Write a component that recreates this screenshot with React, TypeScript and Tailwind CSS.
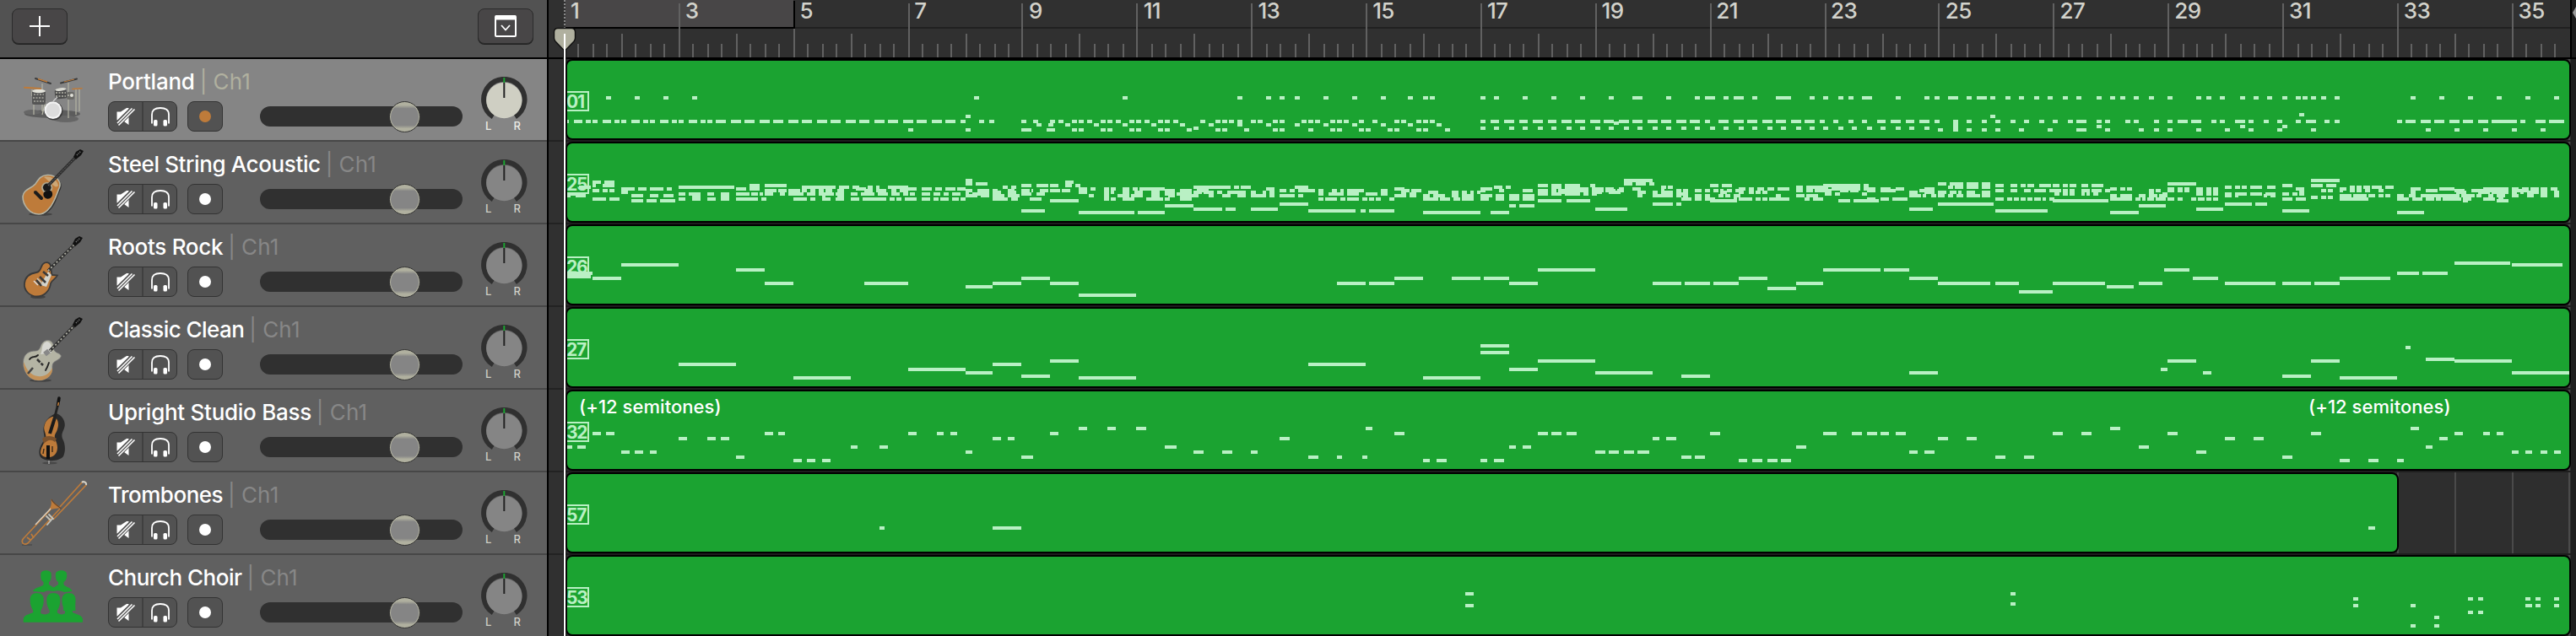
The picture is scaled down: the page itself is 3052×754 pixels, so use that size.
import React from "react";

const BAR = 67.87;
const FIRST_BAR_X = 668;
const CLIP_X = 672;
const FONT = "font-['Inter','Liberation_Sans',sans-serif]";

/** A stretch of notes: start offset in px, ticks per px, and lanes keyed by their y inside the clip. */
type Segment = { at: number; res: number; lanes: Record<number, string> };

type Track = {
  name: string;
  patch: string;
  icon: React.ReactNode;
  end: number;
  labels?: number[];
  selected?: boolean;
  spacing: string;
  notes: Segment[];
};

const snap = (v: number) => Math.round(v / 2) * 2;

function notesPath(segments: Segment[]) {
  let d = "";
  for (const { at, res, lanes } of segments) {
    for (const [y, line] of Object.entries(lanes)) {
      for (const item of line.trim().split(/\s+/)) {
        const [a, b] = item.split("-").map(Number);
        const x0 = snap(at + a / res);
        const x1 = snap(at + (b ?? a + 15) / res);
        d += `M${x0 - CLIP_X} ${y}h${Math.max(2, x1 - x0)}v4h${-Math.max(2, x1 - x0)}z`;
      }
    }
  }
  return d;
}

const Q = 2.529;
const A = 650;
const B = 1250;
const C = 1850;
const D = 2432;

const drumNotes: Segment[] = [
  { at: A, res: Q, lanes: {
    42: "172 258 344 430 1275",
    64: "1249",
    70: "53-61 76-101 111 132 162-187 197 217 248-273 283 303 334-359 369 389 420-445 455 475 501-531 546-577 587-617 632-662 673-703 718-748 759-789 804-834 845-875 890-921 931-961 976-1007 1017-1047 1062-1093 1103-1133 1148-1179 1189-1219 1234 1290 1320 1416 1452 1502 1528",
    74: "1462 1497 1548",
    80: "1077 1249 1416-1447 1492-1517" } },
  { at: B, res: Q, lanes: {
    42: "202 546 632 673 718 804 890 976 1057 1103 1123 1275 1315 1401 1487",
    70: "10 51 71 96 137 157 182 223 243 268 309 329 354 435 481 501 521 546 587 607 652 673 739 759 779 824 845 865 911 951 1017 1037 1082 1103 1123 1275 1305-1330 1345-1376 1391-1416 1431-1462 1477-1502 1517-1548 1558-1568",
    74: "30 116 202 288 374 460 546 632 718 804 890 976 1057 1143",
    78: "415 1275 1315 1361 1401 1447 1487 1533",
    80: "51 71 137 157 223 243 309 329 395 481 501 567 652 673 759 824 845 911 931 996 1017 1082 1103 1168" } },
  { at: C, res: Q, lanes: {
    42: "56 142 212-243 314 400 430-460 486 516-546 572 642-688 744 784 830 860 900-931 1001 1087 1118 1158-1189 1214 1244-1275 1285 1330 1371 1416 1457 1502 1543",
    64: "1285",
    70: "0-30 40-71 86-116 126-157 172-202 212-243 258-288 298-329 344-374 384-415 430 470-501 516-546 556-587 602-632 642-673 688-718 728-759 774 814 860 900 946-971 986-1017 1032-1057 1072-1103 1118 1173 1214 1259 1300 1345 1386 1431 1472 1517 1543-1568",
    72: "157",
    74: "1173",
    78: "15 56 101 142 187 228 273 314 359 400 445 486 531 572 617 658 703 744 784 830 870 915 956 1001 1042 1087 1173",
    80: "1128 1173 1214 1259 1300 1371 1457 1543-1568" } },
  { at: D, res: Q, lanes: {
    42: "30 71 132 172 202 243 288 344 430 460 501 561 602 642 688 728 749 774 804 845 1072 1158 1244 1330 1416 1502",
    62: "738",
    70: "0-15 46 71-101 132 157 217 243 303 344 374-405 415-445 475 501 546-577 587 632 673 728 759-789 814 845 1032 1057-1087 1103-1133 1143-1173 1189-1219 1229-1259 1275-1305 1315-1391 1401 1447-1477 1487-1533",
    76: "132 561 688",
    80: "71-101 157 258 303 344 430 516 587 673 774 1118 1204 1290 1376 1462" } },
];

const acousticNotes: Segment[] = [
  { at: A, res: Q, lanes: {
    42: "1249-1270",
    44: "132-157 167-197 1548-1568",
    46: "1249-1270 1280-1315",
    48: "132-142 162-197 602-632 647-713 1416-1447 1462-1497 1502-1528 1548-1568",
    50: "90-126 389-556 759-860 870-900 910-931 956-971 981-991 1017-1077 1361 1386",
    52: "217-258 268-293 303-344 354-369 561-592 602-632 920-951 1062-1103 1118-1148 1159-1179 1189-1219 1224-1249",
    54: "132-152 162-177 182-197 647-683 688-713 718-754 759-774 784-799 809-824 829-850 865-885 946-971 981-1012 1027-1042 1052-1077 1249-1270 1285-1320 1330-1345 1376-1396 1416-1442 1447-1452 1472-1497 1502-1533 1543-1563",
    56: "217-238 1330-1355 1376-1401",
    58: "53-111 389-410 420-455 475-496 516-541 561-602 607-627 632-642 647-673 693-708 718-764 774-799 809-855 860-885 905-925 936-976 986-1017 1027-1052 1062-1077 1082-1098 1118-1143 1153-1173 1184-1199 1209-1234 1249-1260 1270-1320 1416-1447 1462-1487",
    60: "56-66 81-111 248-283 303-329 344-374 1249-1285 1295-1320 1330-1365 1376-1411",
    62: "430-455 516-541 819-830 865-885",
    64: "132-172 182-212 389-410 430-455 475-501 516-541 561-627 637-652 733-774 784-799 819-845 860-885 905-931 941-1012 1022-1037 1042-1057 1067-1103 1118-1143 1153-1168 1173-1199 1209-1229 1234-1249 1330-1376 1386-1406 1442-1477",
    66: "248-283 293-324 334-379 1502-1568",
    78: "1416-1487" } },
  { at: B, res: Q, lanes: {
    44: "30-56",
    48: "0-10 30-46 61-76 1447-1477 1487-1517 1528-1568",
    50: "415-526 536-551 556-587 718-759 1315-1340 1351-1366 1487-1517",
    52: "71-96 106-121 147-162 167-182 202-223 233-248 253-329 632-658 1017-1047 1275-1310",
    54: "0-10 20-46 329-359 374-410 425-460 673-693 703-718 728-779 789-804 830-845 855-865 875-926 976-996 1037-1062 1067-1098 1275-1290 1330-1345 1401-1431 1447-1477 1487-1502 1507-1568",
    56: "71-96 147-162 167-177 202-223 238-263 288-314 415-440 445-476 486-501 516-572 587-602 622-632 642-658 1118-1148 1189-1209 1219-1234 1244-1254 1264-1275",
    58: "329-359 364-410 789-804 819-865 875-911 931-966 976-996 1037-1052 1062-1082 1447-1477 1487-1517 1528-1568",
    60: "101-116 147-162 187-223 228-263 288-314 339-359 374-425 415-430 460-476 501-526 546-572 587-632 642-658 673-718 728-743 1017-1052 1062-1082 1103-1123 1133-1168 1189-1209 1219-1254 1275-1310 1320-1345 1361-1391 1401-1436",
    64: "147-162 167-182 202-238 273-324 329-344 374-410 789-804 809-845 855-870 875-911 921-936 941-956 961-976 1001-1017 1103-1148 1153-1184 1194-1214 1219-1254 1275-1300 1320-1345 1361-1391 1401-1436",
    66: "0-71 1447-1517 1533-1568",
    70: "673-759",
    72: "329-415 1361-1381 1391-1436",
    76: "415-501 511-541 587-668",
    78: "759-900 915-931 941-1017",
    80: "71-238 248-329 1103-1275 1305-1361" } },
  { at: C, res: Q, lanes: {
    42: "187-273",
    46: "187-212 223-253 263-278 1128-1153 1163-1204 1214-1249 1259-1285",
    48: "15-56 86-101 445-470 481-511 784-895 905-920 1300-1325 1345-1366 1376-1391 1396-1416 1431-1467 1472-1492 1502-1517 1522-1543 1558-1568",
    50: "298-314 319-334 703-723 733-784 1158-1173 1178-1204 1214-1249 1259-1285",
    52: "10-81 91-126 132-157 172-187 212-238 298-308 531-551 561-577 587-607 617-637 647-683 784-799 809-895 905-941 956-986 1001-1027 1087-1118",
    54: "0-35 40-81 106-126 132-162 167-187 344-359 364-379 400-420 430-445 455-470 475-486 496-511 521-531 703-723 733-754 759-784 784-809 835-860 865-890 915-941 956-1001 1072-1087 1300-1325 1345-1366 1386-1406 1416-1452 1462-1492 1502-1517 1522-1538 1558-1568",
    56: "0-35 66-81 91-106 106-121 142-177 228-253 273-288 298-334 475-496 531-546 561-577 582-597 602-617 1042-1067 1087-1118 1128-1153 1163-1184 1189-1199 1214-1239 1259-1285",
    58: "10-56 66-81 91-106 344-379 789-809 819-835 900-915 1477-1492 1502-1517 1522-1538 1558-1568",
    60: "228-243 273-334 344-359 364-379 400-420 430-445 470-486 491-506 516-536 642-658 703-728 733-769 1042-1077 1082-1093 1108-1123 1128-1148 1158-1173 1184-1204 1214-1254 1259-1285",
    64: "359-389 400-420 430-460 516-526 531-572 582-597 602-617 622-683 728-743 754-784 915-941 956-981 991-1037 1300-1325 1335-1350 1355-1371 1376-1391 1396-1411 1416-1436 1442-1452 1462-1477",
    66: "15-86 445-526 830-865 875-951 1472-1568",
    70: "273-334 344-359 1128-1295",
    76: "101-197 1042-1113",
    78: "1300-1457" } },
  { at: D, res: Q, lanes: {
    42: "774-860",
    46: "344-430",
    48: "0-20 30-46 51-71 86-106 116-152 688-718 774-809 819-850",
    50: "516-536 546-561 567-582 592-627 642-668 890-905 910-926 931-951 956-986 996-1022",
    52: "172-192 202-217 223-238 344-364 374-389 395-410 430-450 460-475 481-496 728-754 860-880 1072-1103 1158-1204 1290-1366 1376-1396 1406-1426 1431-1457 1462-1482 1492-1512",
    54: "0-25 30-46 51-66 86-111 116-147 157-172 288-303 309-324 344-364 374-389 395-410 430-450 460-475 481-496 738-754 804-819 824-840 860-870 890-905 910-926 935-951 976-991 1118-1153 1204-1234 1254-1290 1310-1340 1391-1426",
    56: "1072-1087 1209-1239 1275-1310 1315-1366 1376-1391 1401-1411 1421-1457 1462-1482 1502-1517",
    58: "5-20 30-46 51-66 101-111 121-137 288-303 329-344 430-450 460-475 481-496 516-536 546-582 592-627 637-668 688-708 718-733 738-754",
    60: "172-192 202-238 258-278 288-314 319-344 516-536 546-556 632-642 653-668 860-895 900-941 946-966 976-991 996-1012 1032-1052 1067-1087 1103-1204 1204-1219 1224-1264 1270-1285 1305-1320 1330-1356 1376-1396 1421-1441 1462-1482 1502-1517",
    62: "774-794 804-819 824-840",
    64: "0-5 172-238 248-263 268-278 283-303 309-339 344-364 374-389 415-430 435-455 460-475 481-496 688-718 728-759 860-946 1032-1067 1077-1108 1118-1143 1148-1163 1168-1204 1204-1224 1229-1254 1290-1325 1335-1351",
    66: "0-167 1229-1244 1330-1366",
    70: "516-597 607-642",
    72: "258-339",
    76: "430-511",
    78: "688-769",
    80: "172-258 1032-1113" } },
];

const rockNotes: Segment[] = [
  { at: A, res: Q, lanes: { 44: "217-389", 50: "561-647", 54: "53-132", 58: "53-124", 60: "132-217 1416-1502", 66: "647-733 946-1077 1330-1416 1502-1568", 70: "1249-1330" } },
  { at: B, res: Q, lanes: { 50: "1447-1568", 60: "1017-1103 1189-1275 1285-1361", 66: "0-71 845-931 941-1017 1361-1447", 80: "71-243" } },
  { at: C, res: Q, lanes: { 50: "0-101 784-956 966-1042", 60: "531-617 1042-1128", 66: "273-359 369-445 455-531 703-784 1128-1285 1300-1371 1472-1568", 72: "617-703", 76: "1371-1472" } },
  { at: D, res: Q, lanes: { 42: "1204-1371", 44: "1376-1528", 50: "334-410", 54: "1032-1098 1108-1184", 60: "420-496 860-1012", 66: "0-157 258-329 516-668 688-774 784-860", 70: "162-243" } },
];

const cleanNotes: Segment[] = [
  { at: 650, res: 1.96, lanes: { 60: "1164-1231", 64: "302-435 1031-1098", 70: "835-968", 74: "968-1031", 78: "1098-1164", 80: "568-702 1231-1364" } },
  { at: 1440, res: 1.96, lanes: { 42: "615-682", 50: "615-682", 60: "749-882", 64: "216-349", 70: "682-749", 74: "882-1015", 78: "1082-1149", 80: "482-615" } },
  { at: 2232, res: 1.912, lanes: { 44: "1182-1193", 58: "1228-1293", 60: "642-708 968-1033 1293-1423", 70: "627-642", 74: "57-122 723-742 1423-1554", 78: "903-968", 80: "1033-1163" } },
];

const bassNotes: Segment[] = [
  { at: 650, res: 1.96, lanes: {
    42: "1231-1250 1298-1317 1364-1388",
    48: "102-122 133-153 502-521 533-549 835-855 902-917 933-949 1164-1184",
    54: "302-321 368-388 400-419 1031-1051 1066-1082",
    64: "43-55 67-86 702-717 768-788 1431-1458",
    70: "169-188 200-220 235-251 968-984 1497-1521 1564-1568",
    76: "435-455 1098-1125",
    80: "568-588 600-619 635-655" } },
  { at: 1440, res: 1.96, lanes: {
    42: "349-365",
    48: "416-439 749-772 780-804 815-839 1149-1172 1411-1443 1478-1501 1513-1537 1544-1564",
    54: "149-172 1015-1031 1047-1070",
    64: "682-698 713-733 1348-1372",
    70: "16-39 82-98 882-906 913-937 949-972 980-1007",
    76: "216-239 282-294 341-353 1082-1105 1113-1137",
    80: "482-498 514-537 615-631 647-670 1215-1235 1247-1270 1282-1305 1313-1337" } },
  { at: 2232, res: 1.912, lanes: {
    42: "512-535 1193-1212",
    48: "0-11 27-50 382-405 447-470 642-665 968-991 1293-1312 1358-1373 1388-1404",
    54: "122-145 187-210 773-795 838-860 1258-1277",
    64: "577-600 1228-1243",
    70: "57-76 92-115 708-730 1423-1438 1453-1469 1488-1503 1518-1534",
    76: "252-275 317-340 903-926",
    80: "1033-1056 1098-1121 1163-1178" } },
];

const tromboneNotes: Segment[] = [
  { at: 650, res: 1.96, lanes: { 62: "768-780 1031-1098" } },
  { at: 2232, res: 1.912, lanes: { 62: "1098-1113" } },
];

const choirNotes: Segment[] = [
  { at: 1440, res: 1.96, lanes: { 42: "580-600", 56: "580-600" } },
  { at: 2232, res: 1.912, lanes: {
    42: "287-298",
    48: "1063-1075 1323-1335 1346-1358 1453-1465 1476-1488 1518-1530",
    54: "287-298",
    56: "1063-1075 1193-1205 1453-1469 1476-1488 1518-1530",
    64: "1323-1335 1346-1358",
    70: "1247-1258",
    80: "1193-1205 1247-1258" } },
];

function DrumsIcon() {
  return (
    <>
      <ellipse cx="62" cy="65" rx="33" ry="5" fill="#5c5c5c" />
      <ellipse cx="78" cy="71" rx="15" ry="4" fill="#666" />
      <ellipse cx="38" cy="63" rx="10" ry="3" fill="#666" />
      <path d="M50 29V62M81 28V70M90 36V66M94 36V62M40 48V66M54 50L50 66M38 36V44" stroke="#b4b4a4" strokeWidth="1.2" fill="none" />
      <rect x="38" y="37" width="16" height="17" rx="2" fill="#555" />
      <path d="M40 42h12M39 46h14M40 50h12" stroke="#a8a8a0" strokeWidth="1.4" strokeDasharray="2 1.5" />
      <ellipse cx="46" cy="38" rx="8" ry="2.2" fill="#e4e4dc" />
      <rect x="65" y="36" width="14" height="11" rx="2" fill="#4c4c4c" transform="rotate(-6 72 41)" />
      <rect x="79" y="39" width="9" height="9" rx="2" fill="#6a6a66" />
      <path d="M66 40h12M66 44h12M80 43h7" stroke="#b8b8ac" strokeWidth="1.3" strokeDasharray="2 1.5" />
      <ellipse cx="72" cy="36" rx="6.5" ry="1.8" fill="#d8d8d0" transform="rotate(-6 72 36)" />
      <circle cx="85" cy="43" r="2" fill="#e0e0d8" />
      <path d="M63 50L68 45" stroke="#ccc" strokeWidth="1.5" />
      <circle cx="63.5" cy="61.5" r="11" fill="#3c3c3c" />
      <circle cx="62.8" cy="60.6" r="10.4" fill="#f4f4f4" />
      <circle cx="62.8" cy="60.6" r="8.2" fill="#dcdcdc" />
      <path d="M42 23L60 29" stroke="#3c3c3c" strokeWidth="2" strokeLinecap="round" />
      <path d="M45 23.5L56 27" stroke="#be7b3a" strokeWidth="1.4" />
      <path d="M72 28.5L91 23.5" stroke="#3c3c3c" strokeWidth="2" strokeLinecap="round" />
      <path d="M76 27L88 24" stroke="#be7b3a" strokeWidth="1" />
      <path d="M29 33.8L48 35" stroke="#be7b3a" strokeWidth="2" strokeLinecap="round" />
      <path d="M86 35.5L97 34.8" stroke="#be7b3a" strokeWidth="1.6" strokeLinecap="round" />
    </>
  );
}

function GuitarNeck({ x, y, hx, hy, frets }: { x: number; y: number; hx: number; hy: number; frets?: boolean }) {
  return (
    <>
      <path d={`M${x} ${y}L${hx - 3} ${hy + 3}`} stroke="#303030" strokeWidth="3.6" />
      {frets && <path d={`M${x} ${y}L${hx - 3} ${hy + 3}`} stroke="#b0b0a4" strokeWidth="1.8" strokeDasharray="2 2.6" />}
      {!frets && <path d={`M${x} ${y}L${hx - 3} ${hy + 3}`} stroke="#666" strokeWidth="1" strokeDasharray="2 1.5" />}
      <path d={`M${hx - 6} ${hy + 3}L${hx - 3} ${hy - 3}L${hx + 2} ${hy - 6}L${hx + 6} ${hy - 4}L${hx + 3} ${hy + 1}L${hx - 3} ${hy + 6}Z`} fill="#111" />
      <path d={`M${hx - 2} ${hy + 1}L${hx + 3} ${hy - 4}`} stroke="#777" strokeWidth="1.6" strokeDasharray="1.2 1.2" />
    </>
  );
}

function AcousticIcon() {
  return (
    <>
      <ellipse cx="48" cy="86" rx="14" ry="1.8" fill="#444" />
      <path d="M58 41C69 41 75 49 72 56C69 63 68 66 66 71C62 80 55 87 48 87C36 87 28 76 29 66C31 56 39 57 44 51C47 45 50 41 58 41Z" fill="#333" />
      <path d="M56 39.5C66 39 73 47 70.500 54C68 60 67 64 64 70C60 79 53 86 46 86C35 86 27 75 27 65C28 56 37 56 42 50C46 44 48 40 56 39.500Z" fill="#be7b3a" stroke="#b4b4a4" strokeWidth="1.6" />
      <path d="M52 42C60 40 68 45 69 52C66 57 60 48 52 42Z" fill="#cda776" />
      <circle cx="55.700" cy="54.500" r="6.600" fill="#b0a890" />
      <path d="M52 60C56 58 61 56 62 61C63 66 58 69 54 67C51 65 51 62 52 60Z" fill="#111" />
      <circle cx="55.700" cy="54.300" r="4.800" fill="#1a1a1a" />
      <path d="M42 60L49 67" stroke="#1c1c1c" strokeWidth="4" strokeLinecap="round" />
      <GuitarNeck x={57} y={52} hx={93} hy={15} />
    </>
  );
}

function RockIcon() {
  return (
    <>
      <ellipse cx="45" cy="86" rx="9" ry="2" fill="#444" />
      <path d="M53 45.500C57 44 61 47 60 51L61.500 60L68 60.500C66 65 61 66 60 70C59 79 52 85.500 44 85.500C35 85.500 28 78 29 70C30 61 36 58 43 57C50 56 47 48 53 45.500Z" fill="#be7b3a" stroke="#3a3a3a" strokeWidth="1.8" />
      <path d="M61 60L55 74L48 72L57 56Z" fill="#d4d4cc" />
      <path d="M47 62L54 69M43 66L49 73M51 56L57 61" stroke="#3a3a3a" strokeWidth="2.600" />
      <path d="M44 64L51 71" stroke="#c8c8c0" strokeWidth="1.400" />
      <path d="M40 67L45 72" stroke="#ddd" strokeWidth="1.400" />
      <GuitarNeck x={57} y={55} hx={92} hy={20} frets />
    </>
  );
}

function CleanIcon() {
  return (
    <>
      <ellipse cx="48" cy="87" rx="13" ry="1.800" fill="#444" />
      <path d="M55 39.500C61 38 65 45 64 51C66 55 71 54 72.500 58C71 64 62 63 62 70C63 80 56 87 46 87C34 87 27 76 27.500 65C28 55 35 52 42 52C50 52 46 42 55 39.500Z" fill="#b4b4a4" stroke="#777" strokeWidth="0.800" />
      <path d="M28 65C27.500 76 34 87 46 87C56 87 63 80 62 72C58 80 52 83 45 82C37 81 32 76 28 65Z" fill="#c39157" />
      <path d="M55 41C60 41 63 47 61 54L48 56C51 51 48 44 55 41Z" fill="#d8d8d2" />
      <path d="M35 62C38 57 41 61 45 57M54 75C57 70 57 68 58 66" stroke="#222" strokeWidth="1.800" fill="none" strokeLinecap="round" />
      <path d="M44 62L51 69" stroke="#333" strokeWidth="2.600" strokeDasharray="5 1.500" />
      <path d="M33 79L39 72" stroke="#444" strokeWidth="2.600" />
      <path d="M53 56L58 52" stroke="#888" strokeWidth="6" />
      <GuitarNeck x={59} y={52} hx={92} hy={18} frets />
    </>
  );
}

function BassIcon() {
  return (
    <>
      <ellipse cx="59" cy="87" rx="9" ry="1.500" fill="#484848" />
      <path d="M66 28C74 30 78 38 76.500 44C75 50 72 52 74 58C78 65 77.500 74 75 79C70 86 50 86 47 78C45 71 49 65 52 60C54 55 50 50 52 43C54 36 59 31 66 28Z" fill="#2a2a2a" />
      <path d="M62 32C68 32 70 39 68.500 45C67 52 64 52 65 58C69 66 69 72 65 77C60 82 50 81 48 75C48 69 52 64 54 59C56 53 51 49 52.500 43C54 37 57 34 62 32Z" fill="#be7b3a" />
      <path d="M50 58C54 54 62 54 67 58L65 62C60 58 56 60 52 64Z" fill="#7b522d" />
      <path d="M65 33L59 52" stroke="#1a1a1a" strokeWidth="4" />
      <path d="M70 12L64 36" stroke="#222" strokeWidth="3" />
      <path d="M70 10L68.500 18" stroke="#111" strokeWidth="3.600" strokeLinecap="round" />
      <path d="M69.500 15L68.600 19" stroke="#be7b3a" strokeWidth="1.600" />
      <path d="M57 66V82" stroke="#111" strokeWidth="4" />
      <path d="M52 70L51 76M62 67L62 74" stroke="#3a2a1a" strokeWidth="1.400" />
      <path d="M58 84V88" stroke="#bbb" strokeWidth="1.200" />
    </>
  );
}

function TromboneIcon() {
  return (
    <>
      <path d="M26 86H38" stroke="#4a4a4a" strokeWidth="1.400" />
      <g fill="none" stroke="#be7b3a" strokeWidth="1.700">
        <path d="M70 42L97 12C99 10 103 12 102 15L63 56" />
        <path d="M27 84C25 81 27 79 30 76L60 44M33 84C30 86 28 85 27 84M33 84L71 43M37 73L40 78M32 77L36 80" />
      </g>
      <path d="M97 12C99 10 103 12 102 15" fill="none" stroke="#d0d0c8" strokeWidth="2" />
      <path d="M60 31.500C64 37 68 38 72 42L62 43.500C60 44 58 45 56 47C60 42 62 38 60 31.500Z" fill="#be7b3a" />
      <path d="M61 32C63 37 68 39 72.500 43" fill="none" stroke="#6a4526" strokeWidth="1.200" />
      <path d="M60 43L42 62" stroke="#dad2c4" strokeWidth="1.400" />
      <path d="M55 52L60 57M58 50L63 55M56 62L62 55" stroke="#c4c4bc" strokeWidth="1.800" strokeLinecap="round" />
    </>
  );
}

function ChoirIcon() {
  const person = (cx: number) => (
    <path
      key={cx}
      d={`M${cx - 8} 54C${cx - 8.5} 48 ${cx - 5} 45 ${cx} 45C${cx + 5} 45 ${cx + 8.5} 48 ${cx + 8} 54C${cx + 8} 60 ${cx + 5.5} 64 ${cx + 4.5} 66V71H${cx - 4.5}V66C${cx - 5.5} 64 ${cx - 8} 60 ${cx - 8} 54Z`}
    />
  );
  return (
    <g fill="#1ba331">
      <path d="M39 43C41 38 50 38 51.500 35V32C48 30 48 25 48.500 22C49 17 60 17 60.700 22C61 26 61 30 58 32V35L63.500 38.500L69 35V32C66 30 65.500 26 66 22C67 17 78.500 17 79 22C79.500 26 79 30 75.500 32V35C77 38 84 38 85.500 43L76 44C72 42 67 42 63.500 43C58 42 55 42 52 44Z" />
      {[43.7, 63.3, 81.5].map(person)}
      <path d="M75 58V66H89.500L89 54Z" />
      <path d="M27.700 79.700V76C28 70 38 70 41 67H46C48 70 51 70 53.500 70.500C56 70 59 69 60 67H66.500C68 69 70 70 73 70.500C76 70 78 69 79 67H84C87 70 97 70 98 76V79.700Z" />
    </g>
  );
}

const tracks: Track[] = [
  { name: "Portland", patch: "01", icon: <DrumsIcon />, end: 3046, selected: true, spacing: "tracking-[-0.25px]", notes: drumNotes },
  { name: "Steel String Acoustic", patch: "25", icon: <AcousticIcon />, end: 3046, spacing: "tracking-[-0.38px]", notes: acousticNotes },
  { name: "Roots Rock", patch: "26", icon: <RockIcon />, end: 3046, spacing: "tracking-[-0.3px]", notes: rockNotes },
  { name: "Classic Clean", patch: "27", icon: <CleanIcon />, end: 3046, spacing: "tracking-[-0.55px]", notes: cleanNotes },
  { name: "Upright Studio Bass", patch: "32", icon: <BassIcon />, end: 3046, labels: [686, 2735], spacing: "tracking-[-0.28px]", notes: bassNotes },
  { name: "Trombones", patch: "57", icon: <TromboneIcon />, end: 2842, spacing: "tracking-[-0.5px]", notes: tromboneNotes },
  { name: "Church Choir", patch: "53", icon: <ChoirIcon />, end: 3046, spacing: "tracking-[-0.5px]", notes: choirNotes },
];

function PanKnob({ selected }: { selected?: boolean }) {
  return (
    <div className="mt-[21px] ml-5 w-[58px] shrink-0">
      <svg width="58" height="52" viewBox="0 0 58 52" className="block">
        <path d="M16.300 46.500A24.200 24.200 0 1 1 42.300 46.500" transform="translate(0 1)" fill="none" stroke="#303030" strokeWidth="6" />
        <circle cx="29.300" cy="28" r="21.200" fill={selected ? "#cfcfc3" : "#858585"} />
        <path d="M29.300 7V25" stroke="#222" strokeWidth="2" />
        <path d="M29.300 1V7" stroke="#1ba331" strokeWidth="2" />
      </svg>
      <div className={`flex justify-between pr-[9px] pl-[7px] text-[13px] leading-[13px] font-medium ${selected ? "text-[#ecece6]" : "text-[#cfcfc6]"}`}>
        <span>L</span>
        <span>R</span>
      </div>
    </div>
  );
}

function TrackHeader({ track }: { track: Track }) {
  const { name, icon, selected, spacing } = track;
  return (
    <div className={`flex h-[98px] shrink-0 border-b-2 border-[#474747] ${selected ? "bg-[#858585]" : "bg-[#606060]"}`}>
      <svg width="128" height="96" viewBox="0 0 128 96" className="shrink-0">{icon}</svg>
      <div className="flex w-[420px] shrink-0 flex-col">
        <div className="mt-[10px] flex h-[34px] text-[26px] leading-[34px] whitespace-nowrap text-white">
          <span className={`font-medium ${spacing}`}>{name}</span>
          <span className={`flex gap-[7px] pl-[6px] tracking-[0.2px] ${selected ? "text-[#b0b09f]" : "text-[#878787]"}`}>
            <span>|</span>
            <span>Ch1</span>
          </span>
        </div>
        <div className="mt-[6px] flex h-9 items-center">
          <div className="flex h-9 w-[82px] rounded-lg border border-[#333] bg-[#525252]">
            <div className="flex h-full w-[41px] items-center justify-center border-r-2 border-[#404040]">
              <svg width="24" height="24" viewBox="0 0 24 24">
                <path d="M1.500 6.500H6L13 2L15.500 2V22L8 16.500H1.500Z" fill="#fff" />
                <path d="M0 23.500L22.500 1" stroke="#525252" strokeWidth="7" />
                <path d="M2 20L19.500 2.500M3.500 22.500L22.500 3.500" stroke="#fff" strokeWidth="1.600" />
              </svg>
            </div>
            <div className="flex flex-1 items-center justify-center">
              <svg width="24" height="24" viewBox="0 0 24 24">
                <path d="M2 20.500V10C2 4 6 2 12 2S22 4 22 10V20.500" fill="none" stroke="#fff" strokeWidth="1.800" />
                <rect x="4" y="16" width="4.500" height="7.500" rx="1.500" fill="#fff" />
                <rect x="15.500" y="16" width="4.500" height="7.500" rx="1.500" fill="#fff" />
              </svg>
            </div>
          </div>
          <div className="ml-3 flex h-9 w-[42px] items-center justify-center rounded-lg border border-[#333] bg-[#525252]">
            <div className={`size-[14px] rounded-full ${selected ? "bg-[#be7b3a]" : "bg-white"}`} />
          </div>
          <div className="ml-[44px] flex h-6 w-[240px] items-center rounded-full bg-[#303030] pl-[153px]">
            <div className="size-[37px] shrink-0 rounded-full border border-[#333] bg-[#b0b09f] p-px">
              <div className="size-full rounded-full bg-[linear-gradient(#b0b09f_0_8%,#858585_20%_80%,#b0b09f_92%)]" />
            </div>
          </div>
        </div>
      </div>
      <PanKnob selected={selected} />
    </div>
  );
}

function Ruler() {
  const ticks: React.ReactNode[] = [];
  for (let q = 1; q <= 139; q++) {
    const bar = q / 4;
    const x = snap(FIRST_BAR_X + bar * BAR) - FIRST_BAR_X;
    const top = q % 8 === 0 ? (q === 16 ? 34 : 4) : q % 4 === 0 ? 40 : 52;
    ticks.push(<rect key={q} x={x} y={top} width="2" height={68 - top} fill="#616161" />);
  }
  return (
    <div className="relative flex h-[70px] shrink-0 border-b-2 border-black bg-[#303030]">
      <svg width="2384" height="68" viewBox="0 0 2384 68" className="absolute top-0 left-0">
        <rect x="0" y="32" width="2378" height="2" fill="#202020" />
        <rect x="2" y="0" width="270" height="32" fill="#484647" />
        <path d="M0 32H274M273 0V34" stroke="#000" strokeWidth="2" transform="translate(0 1)" />
        {ticks}
        <rect x="2378" y="0" width="6" height="68" fill="#1c1c1c" />
        <rect x="2377" y="0" width="2" height="68" fill="#000" />
        <path d="M2384 8L2380 15L2384 22Z" fill="#9a9a9a" />
      </svg>
      {Array.from({ length: 18 }, (_, i) => (
        <div key={i} className={`relative shrink-0 pl-2 text-[26px] leading-[26px] font-medium tracking-[-0.6px] text-[#d2d2cb] ${i === 17 ? "w-[76px]" : "w-[135.740px]"}`}>
          {i * 2 + 1}
        </div>
      ))}
    </div>
  );
}

function Lane({ track }: { track: Track }) {
  const width = track.end - 670;
  return (
    <div className="flex h-[98px] shrink-0 border-b-2 border-[rgba(0,0,0,0.35)] bg-[#2e2e2e]">
      <div className="flex h-24 w-[2378px] shrink-0 bg-[repeating-linear-gradient(90deg,#4a4a4a_0_2px,transparent_2px_67.870px)] pl-[2px]">
        <div className="relative h-24 overflow-hidden rounded-lg border-2 border-black bg-[#1ba331]" style={{ width }}>
          <svg width={width - 4} height="92" shapeRendering="crispEdges" className="absolute top-0 left-0">
            <path d={notesPath(track.notes)} fill="#b9f0c4" />
          </svg>
          <div className="absolute top-[36px] left-[-4px] flex h-6 w-[30px] items-center border-2 border-[#b9f0c4] pl-px text-[21px] leading-none font-bold tracking-[-1.2px] text-[#b9f0c4]">
            {track.patch}
          </div>
          {track.labels?.map((x) => (
            <div key={x} className="absolute top-[5px] text-[22px] leading-[26px] font-medium tracking-[0.05px] whitespace-nowrap text-white" style={{ left: x - CLIP_X }}>
              (+12 semitones)
            </div>
          ))}
        </div>
      </div>
      <div className="w-[6px] shrink-0 bg-[#1f1f1f]" />
    </div>
  );
}

export default function App() {
  return (
    <div className={`relative flex h-[754px] w-[3052px] overflow-hidden bg-[#303030] ${FONT}`}>
      <div className="flex w-[650px] shrink-0 flex-col border-r-2 border-black">
        <div className="flex h-[70px] shrink-0 items-start justify-between border-b-2 border-black bg-[#525252] pt-[10px] pr-4 pl-[14px]">
          <button className="flex h-[42px] w-[66px] items-center justify-center rounded-lg border border-[#2c2c2c] bg-[#484647] shadow-[0_1px_0_#222]">
            <svg width="26" height="26" viewBox="0 0 26 26">
              <path d="M13 1V25M1 13H25" stroke="#fff" strokeWidth="2" />
            </svg>
          </button>
          <button className="flex h-[42px] w-[66px] items-center justify-center rounded-lg border border-[#2c2c2c] bg-[#484647] shadow-[0_1px_0_#222]">
            <svg width="26" height="26" viewBox="0 0 26 26">
              <rect x="1" y="1" width="24" height="24" rx="1" fill="none" stroke="#fff" strokeWidth="2" />
              <rect x="1" y="0.500" width="24" height="5" fill="#fff" />
              <path d="M8 12L13 17.500L18 12" fill="none" stroke="#fff" strokeWidth="1.800" />
            </svg>
          </button>
        </div>
        {tracks.map((t) => (
          <TrackHeader key={t.name} track={t} />
        ))}
      </div>
      <div className="flex w-[18px] shrink-0 flex-col">
        <div className="h-[70px] shrink-0 border-b-2 border-black" />
        {tracks.map((t) => (
          <div key={t.name} className="h-[98px] shrink-0 border-b-2 border-[#222]" />
        ))}
      </div>
      <div className="flex w-[2384px] shrink-0 flex-col">
        <Ruler />
        {tracks.map((t) => (
          <Lane key={t.name} track={t} />
        ))}
      </div>
      <svg width="28" height="754" viewBox="0 0 28 754" className="absolute top-0 left-[655px]">
        <path d="M14 0V34" stroke="#888" strokeWidth="2" strokeDasharray="2 2" />
        <path d="M1.500 38Q1.500 33.500 6 33.500H22Q26.500 33.500 26.500 38V45Q26.500 47 25 49L14 60.500L3 49Q1.500 47 1.500 45Z" fill="#b0b09f" stroke="#111" strokeWidth="1.400" />
        <rect x="12" y="60" width="1" height="694" fill="#111" />
        <rect x="15" y="60" width="1.500" height="694" fill="#111" fillOpacity="0.600" />
        <rect x="13" y="40" width="2" height="714" fill="#fff" />
      </svg>
    </div>
  );
}
